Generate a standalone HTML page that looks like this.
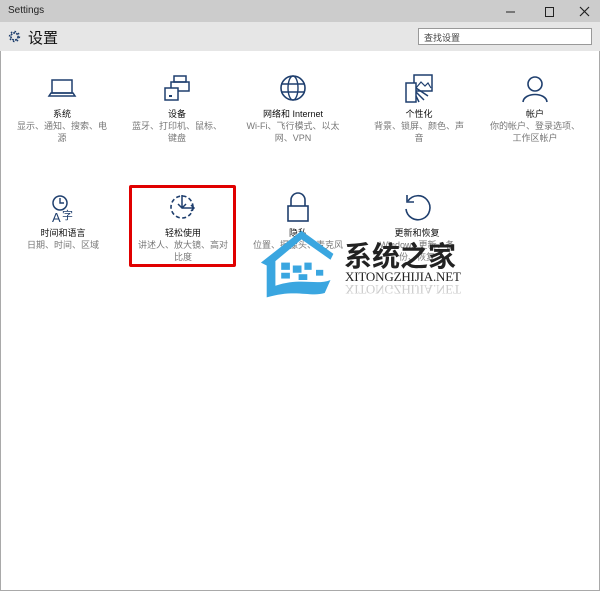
<!DOCTYPE html>
<html><head><meta charset="utf-8"><style>
*{margin:0;padding:0;box-sizing:border-box}
body{width:600px;height:591px;background:#fff;font-family:"Liberation Sans","Noto Sans CJK SC",sans-serif;position:relative;overflow:hidden}
.win{position:absolute;left:0;top:0;width:600px;height:591px;border:1px solid #a9a9a9;border-top:none}
.tb{position:absolute;left:0;top:0;width:600px;height:22px;background:#cccccc}
.tb .t{position:absolute;left:8px;top:5px;font-size:10px;color:#222}
.hd{position:absolute;left:0;top:22px;width:600px;height:29px;background:#e6e6e6}
.hd .h{position:absolute;left:28px;top:5px;font-size:15px;color:#111}
.search{position:absolute;left:418px;top:28px;width:174px;height:17px;background:#fff;border:1px solid #999;font-size:9px;color:#444;padding:2px 0 0 5px}
.it{position:absolute;width:110px;text-align:center}
.it svg{display:block;margin:0 auto}
.ti{font-size:9px;color:#111;margin-top:8px;line-height:12px}
.de{font-size:9px;color:#777;line-height:12px}
.red{position:absolute;left:129px;top:185px;width:107px;height:82px;border:3px solid #e00000;border-radius:2px}
</style></head><body>
<div class="win"></div>
<div class="tb"><div class="t">Settings</div>
<svg style="position:absolute;left:505px;top:6px" width="90" height="12"><line x1="1" y1="6" x2="10" y2="6" stroke="#222"/><rect x="40.5" y="1.5" width="8" height="9" fill="none" stroke="#222"/><path d="M75 1 L84 10 M84 1 L75 10" stroke="#222" stroke-width="1.2"/></svg>
</div>
<div class="hd">
<svg style="position:absolute;left:8px;top:8px" width="13" height="13" viewBox="0 0 13 13"><circle cx="6.5" cy="6.5" r="3.6" fill="none" stroke="#1f3f6e" stroke-width="1.6" stroke-dasharray="2 1.1"/><circle cx="6.5" cy="6.5" r="5" fill="none" stroke="#1f3f6e" stroke-width="1.4" stroke-dasharray="1.6 2.3"/><circle cx="6.5" cy="6.5" r="1.8" fill="#e6e6e6"/></svg>
<div class="h">设置</div></div>
<div class="search">查找设置</div>

<div class="it" style="left:7px;top:76px"><svg width="30" height="24"><rect x="5" y="4" width="20" height="13" fill="none" stroke="#1f3f6e" stroke-width="1.5"/><path d="M2 20 H28 L26 17 H4 Z" fill="none" stroke="#1f3f6e" stroke-width="1.5"/></svg><div class="ti">系统</div><div class="de">显示、通知、搜索、电<br>源</div></div>
<div class="it" style="left:122px;top:74px"><svg width="30" height="28"><rect x="12" y="2" width="12" height="6" fill="none" stroke="#1f3f6e" stroke-width="1.5"/><rect x="9" y="8" width="18" height="9" fill="none" stroke="#1f3f6e" stroke-width="1.5"/><rect x="3" y="14" width="13" height="12" fill="#fff" stroke="#1f3f6e" stroke-width="1.5"/><rect x="7" y="21" width="3" height="2" fill="#1f3f6e"/></svg><div class="ti" style="margin-top:6px">设备</div><div class="de">蓝牙、打印机、鼠标、<br>键盘</div></div>
<div class="it" style="left:238px;top:74px"><svg width="30" height="28"><circle cx="15" cy="14" r="12" fill="none" stroke="#1f3f6e" stroke-width="1.6"/><ellipse cx="15" cy="14" rx="5" ry="12" fill="none" stroke="#1f3f6e" stroke-width="1.4"/><path d="M3 10 H27 M3 18 H27" stroke="#1f3f6e" stroke-width="1.4"/></svg><div class="ti" style="margin-top:6px">网络和 Internet</div><div class="de">Wi-Fi、飞行模式、以太<br>网、VPN</div></div>
<div class="it" style="left:364px;top:74px"><svg width="30" height="30"><rect x="10" y="1" width="18" height="16" fill="none" stroke="#1f3f6e" stroke-width="1.5"/><path d="M12 14 L17 8 L21 12 L24 9 L27 14" fill="none" stroke="#1f3f6e" stroke-width="1.2"/><rect x="2" y="9" width="10" height="19" fill="#fff" stroke="#1f3f6e" stroke-width="1.5"/><path d="M12 14 L24 22 M12 18 L20 26 M12 22 L15 28" stroke="#1f3f6e" stroke-width="1.5"/></svg><div class="ti" style="margin-top:4px">个性化</div><div class="de">背景、锁屏、颜色、声<br>音</div></div>
<div class="it" style="left:480px;top:74px"><svg width="30" height="30"><circle cx="15" cy="10" r="7" fill="none" stroke="#1f3f6e" stroke-width="1.6"/><path d="M3 28 C4 18 26 18 27 28" fill="none" stroke="#1f3f6e" stroke-width="1.6"/></svg><div class="ti" style="margin-top:4px">帐户</div><div class="de">你的帐户、登录选项、<br>工作区帐户</div></div>

<div class="it" style="left:8px;top:193px"><svg width="30" height="30"><circle cx="12" cy="10" r="7" fill="none" stroke="#1f3f6e" stroke-width="1.5"/><path d="M12 5 V10 H16" fill="none" stroke="#1f3f6e" stroke-width="1.4"/><text x="4" y="29" font-size="13" fill="#1f3f6e" font-family="Liberation Sans">A</text><text x="14" y="26" font-size="11" fill="#1f3f6e" font-family="Noto Sans CJK SC">字</text></svg><div class="ti" style="margin-top:4px">时间和语言</div><div class="de">日期、时间、区域</div></div>
<div class="it" style="left:128px;top:193px"><svg width="30" height="28"><circle cx="14" cy="14" r="11" fill="none" stroke="#1f3f6e" stroke-width="1.6" stroke-dasharray="4 2.5"/><path d="M14 2 V15 M10 11 L14 15 L18 11 M14 15 H26 M23 12 L26 15 L23 18" fill="none" stroke="#1f3f6e" stroke-width="1.5"/></svg><div class="ti" style="margin-top:6px">轻松使用</div><div class="de">讲述人、放大镜、高对<br>比度</div></div>
<div class="red"></div>
<div class="it" style="left:243px;top:191px"><svg width="30" height="32"><path d="M8 15 V9 A7 7 0 0 1 22 9 V15" fill="none" stroke="#1f3f6e" stroke-width="1.6"/><rect x="5" y="15" width="20" height="15" fill="none" stroke="#1f3f6e" stroke-width="1.6"/></svg><div class="ti" style="margin-top:4px">隐私</div><div class="de">位置、摄像头、麦克风</div></div>
<div class="it" style="left:362px;top:193px"><svg width="32" height="30"><path d="M7 8 A12 12 0 1 1 5 16" fill="none" stroke="#1f3f6e" stroke-width="1.6"/><path d="M6 2 V9 H13" fill="none" stroke="#1f3f6e" stroke-width="1.6"/></svg><div class="ti" style="margin-top:4px">更新和恢复</div><div class="de">Windows 更新、备<br>份、恢复</div></div>

<svg style="position:absolute;left:258px;top:222px" width="210" height="80">
<g transform="scale(1.45)">
<path d="M2 28 L30 6 L52 22 L50 26 L30 12 L12 27 V44 C30 38 40 44 50 40 L46 49 C36 52 26 46 6 52 V30 Z" fill="#3aa6e0"/>
<rect x="16" y="28" width="6" height="5" fill="#3aa6e0"/><rect x="24" y="30" width="6" height="5" fill="#3aa6e0"/><rect x="32" y="28" width="5" height="5" fill="#3aa6e0"/><rect x="16" y="35" width="6" height="4" fill="#3aa6e0"/><rect x="28" y="36" width="6" height="4" fill="#3aa6e0"/><rect x="40" y="33" width="5" height="4" fill="#3aa6e0"/>
</g>
<text x="86" y="44" font-size="28" font-weight="bold" fill="#222" font-family="Noto Sans CJK SC">系统之家</text>
<text x="87" y="59" font-size="13" fill="#222" font-family="Liberation Serif" textLength="116">XITONGZHIJIA.NET</text>
<text x="87" y="63" font-size="13" fill="#ccc" font-family="Liberation Serif" textLength="116" transform="translate(0,126) scale(1,-1)">XITONGZHIJIA.NET</text>
</svg>
</body></html>
